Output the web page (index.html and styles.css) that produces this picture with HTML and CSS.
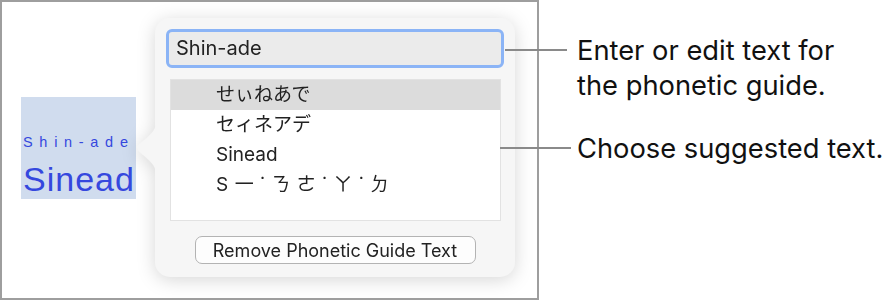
FILE: index.html
```html
<!DOCTYPE html>
<html lang="ja">
<head>
  <meta charset="UTF-8">
  <title>Phonetic Guide</title>
  <link rel="stylesheet" href="styles.css">
</head>
<body>
  <div class="figure">
    <div class="frame">
      <div class="sample">
        <div class="ruby">Shin-ade</div>
        <div class="base">Sinead</div>
      </div>
      <div class="popover">
        <svg class="arrow" width="19" height="50" viewBox="0 0 19 50">
          <path d="M19 0 C19 12 0 20 0 25 C0 30 19 38 19 50 Z" fill="#f6f6f6"/>
        </svg>
        <div class="field">Shin-ade</div>
        <ul class="suggestions">
          <li class="selected">せぃねあで</li>
          <li>セィネアデ</li>
          <li>Sinead</li>
          <li class="bopomofo">S一˙ㄋㄜ˙ㄚ˙ㄉ</li>
        </ul>
        <div class="actions">
          <button>Remove Phonetic Guide Text</button>
        </div>
      </div>
    </div>

    <div class="callouts">
      <p class="callout callout-edit">Enter or edit text for<br>the phonetic guide.</p>
      <p class="callout callout-choose">Choose suggested text.</p>
    </div>
  </div>
</body>
</html>
```

FILE: styles.css
```css
body {
  margin: 0;
  background: #fff;
  font-family: Inter, "Noto Sans CJK JP", sans-serif;
  color: #1d1d1d;
}

.figure {
  display: flex;
  width: 894px;
  height: 302px;
}

.frame {
  box-sizing: border-box;
  width: 539px;
  height: 300px;
  border: 2px solid #9e9e9e;
  display: flex;
  align-items: flex-start;
}

/* selected text in the document */
.sample {
  box-sizing: border-box;
  width: 115px;
  height: 102px;
  margin: 95px 0 0 19px;
  padding: 37px 0 0 2px;
  background: #d0dcee;
  color: #3548de;
  white-space: nowrap;
}

.ruby {
  font-family: "Liberation Sans", sans-serif;
  font-size: 14.5px;
  line-height: 17px;
  letter-spacing: 6.7px;
}

.base {
  margin-top: 8px;
  font-family: "Liberation Sans", sans-serif;
  font-size: 34px;
  line-height: 40px;
  letter-spacing: 1px;
}

/* popover */
.popover {
  position: relative;
  box-sizing: border-box;
  width: 360px;
  height: 259px;
  margin: 16px 0 0 19px;
  padding: 11px;
  background: #f6f6f6;
  border-radius: 15px;
  filter: drop-shadow(0 3px 9px rgba(0, 0, 0, 0.16));
}

.arrow {
  position: absolute;
  left: -18px;
  top: 105px;
}

.field {
  box-sizing: border-box;
  height: 39px;
  padding-left: 7px;
  border: 3px solid #8bb4f6;
  border-radius: 6px;
  background: #ebebeb;
  font-size: 20px;
  line-height: 33px;
  color: #222;
}

.suggestions {
  list-style: none;
  box-sizing: border-box;
  height: 142px;
  margin: 11px 3px 0 4px;
  padding: 0;
  border: 1px solid #e2e2e2;
  background: #fff;
}

.suggestions li {
  height: 30px;
  padding-left: 45px;
  font-size: 19px;
  line-height: 30px;
  color: #222;
}

.suggestions li.selected {
  background: #dcdcdc;
}

.suggestions li.bopomofo {
  font-family: Inter, "Noto Sans CJK TC", sans-serif;
  letter-spacing: 6.5px;
}

.actions {
  display: flex;
  justify-content: center;
  margin-top: 15px;
}

.actions button {
  box-sizing: border-box;
  width: 281px;
  height: 28px;
  padding: 0;
  border: 1px solid #b3b3b3;
  border-radius: 7px;
  background: #fdfdfd;
  font-family: Inter, sans-serif;
  font-size: 18px;
  color: #222;
}

/* callouts */
.callouts {
  padding: 33px 0 0 38px;
}

.callout {
  position: relative;
  margin: 0;
  font-size: 27.3px;
  line-height: 35px;
  color: #111;
}

.callout-choose {
  margin-top: 28px;
}

.callout::before {
  content: "";
  position: absolute;
  top: 16px;
  height: 2px;
  background: #8a8a8a;
}

.callout-edit::before {
  left: -72px;
  width: 62px;
}

.callout-choose::before {
  left: -77px;
  width: 71px;
}
```
